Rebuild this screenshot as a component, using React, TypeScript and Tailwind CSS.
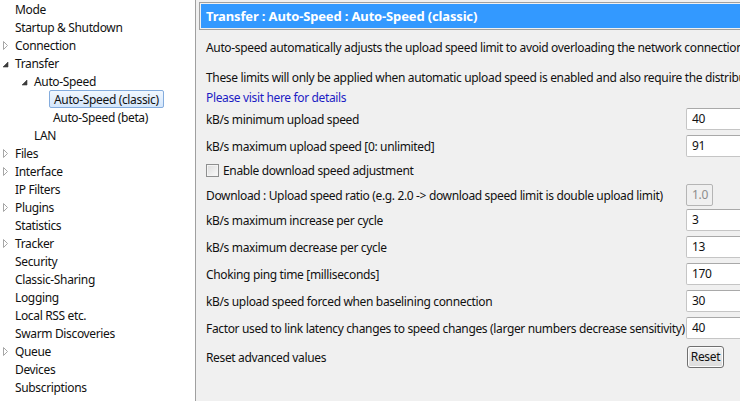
import React from 'react'

type Node = { label: string; level: number; arrow?: 'closed' | 'open'; selected?: boolean }

const tree: Node[] = [
  { label: 'Mode', level: 0 },
  { label: 'Startup & Shutdown', level: 0 },
  { label: 'Connection', level: 0, arrow: 'closed' },
  { label: 'Transfer', level: 0, arrow: 'open' },
  { label: 'Auto-Speed', level: 1, arrow: 'open' },
  { label: 'Auto-Speed (classic)', level: 2, selected: true },
  { label: 'Auto-Speed (beta)', level: 2 },
  { label: 'LAN', level: 1 },
  { label: 'Files', level: 0, arrow: 'closed' },
  { label: 'Interface', level: 0, arrow: 'closed' },
  { label: 'IP Filters', level: 0 },
  { label: 'Plugins', level: 0, arrow: 'closed' },
  { label: 'Statistics', level: 0 },
  { label: 'Tracker', level: 0, arrow: 'closed' },
  { label: 'Security', level: 0 },
  { label: 'Classic-Sharing', level: 0 },
  { label: 'Logging', level: 0 },
  { label: 'Local RSS etc.', level: 0 },
  { label: 'Swarm Discoveries', level: 0 },
  { label: 'Queue', level: 0, arrow: 'closed' },
  { label: 'Devices', level: 0 },
  { label: 'Subscriptions', level: 0 },
]

const indent = ['pl-[15px]', 'pl-[34px]', 'pl-[53px]']
const arrowPos = ['left-[2px]', 'left-[21px]', 'left-[40px]']

function Arrow({ kind, level }: { kind: 'closed' | 'open'; level: number }) {
  return (
    <svg
      className={`absolute top-[5px] ${arrowPos[level]}`}
      width="8"
      height="9"
      viewBox="0 0 8 9"
    >
      {kind === 'closed' ? (
        <path d="M1.5 0.5 L5.5 4.5 L1.5 8.5 Z" fill="white" stroke="#a6a6a6" strokeWidth="1" />
      ) : (
        <path d="M6 3 L6 8 L1 8 Z" fill="#3c3c3c" stroke="#3c3c3c" strokeWidth="0.6" />
      )}
    </svg>
  )
}

function TreeRow({ node }: { node: Node }) {
  return (
    <div className={`relative flex h-[18px] items-center ${indent[node.level]}`}>
      {node.arrow ? <Arrow kind={node.arrow} level={node.level} /> : null}
      {node.selected ? (
        <span className="-ml-[4px] flex h-[18px] items-center rounded-[2px] border border-[#84acdd] bg-gradient-to-b from-[#f1f7fe] to-[#d3e6fc] px-[4px] pt-px leading-none">
          {node.label}
        </span>
      ) : (
        <span className="pt-px leading-none">{node.label}</span>
      )}
    </div>
  )
}

function Field({ value, disabled }: { value: string; disabled?: boolean }) {
  if (disabled) {
    return (
      <div className="flex h-[22px] w-[27px] items-center rounded-[2px] border border-[#b5b5b5] bg-[#f0f0f0] pl-[5px] text-[#8d8d8d]">
        {value}
      </div>
    )
  }
  return (
    <div className="flex h-[22px] w-[80px] shrink-0 items-center rounded-[2px] border border-[#c5c5c5] border-t-[#a9a9a9] bg-white pl-[5px]">
      {value}
    </div>
  )
}

function Row({ label, children, className = '' }: { label: string; children: React.ReactNode; className?: string }) {
  return (
    <div className={`flex h-[22px] items-center ${className}`}>
      <div className="w-[480px] shrink-0 whitespace-nowrap pt-px">{label}</div>
      <div className="flex">{children}</div>
    </div>
  )
}

export default function App() {
  return (
    <div
      className="flex h-[401px] w-[740px] overflow-hidden text-[12px] tracking-[-0.35px] text-[#111]"
      style={{ fontFamily: '"Noto Sans", "Open Sans", sans-serif' }}
    >
      <div className="w-[196px] shrink-0 border-r border-[#a0a0a0] bg-white">
        {tree.map((n) => (
          <TreeRow key={n.label} node={n} />
        ))}
      </div>

      <div className="min-w-0 flex-1 bg-[#f0f0f0] pl-[3px] pt-[2px]">
        <div className="w-[600px] border border-[#a0a0a0] p-px">
          <div className="flex h-[24px] items-center bg-[#3399ff] pl-[5px] pt-px text-[13px] font-bold tracking-[-0.15px] whitespace-nowrap text-white">
            Transfer : Auto-Speed : Auto-Speed (classic)
          </div>
        </div>

        <div className="pl-[7px]">
          <div className="mt-[8px] flex h-[18px] items-center whitespace-nowrap pt-px">
            Auto-speed automatically adjusts the upload speed limit to avoid overloading the network connection
          </div>
          <div className="mt-[12px] flex h-[18px] items-center whitespace-nowrap pt-px">
            These limits will only be applied when automatic upload speed is enabled and also require the distributed database
          </div>
          <div className="mt-[2px] flex h-[18px] items-center whitespace-nowrap pt-px text-[#1c1cc4]">
            Please visit here for details
          </div>

          <Row label="kB/s minimum upload speed" className="mt-[2px]">
            <Field value="40" />
          </Row>
          <Row label="kB/s maximum upload speed [0: unlimited]" className="mt-[5px]">
            <Field value="91" />
          </Row>
          <div className="mt-[4px] flex h-[18px] items-center gap-[4px]">
            <span className="h-[13px] w-[13px] border border-[#8e8f8f] bg-gradient-to-br from-[#dcdcdc] to-[#fbfbfb] shadow-[inset_0_0_0_1px_#f4f4f4]" />
            <span className="pt-px">Enable download speed adjustment</span>
          </div>
          <Row label="Download : Upload speed ratio (e.g. 2.0 -> download speed limit is double upload limit)" className="mt-[5px]">
            <Field value="1.0" disabled />
          </Row>
          <Row label="kB/s maximum increase per cycle" className="mt-[3px]">
            <Field value="3" />
          </Row>
          <Row label="kB/s maximum decrease per cycle" className="mt-[5px]">
            <Field value="13" />
          </Row>
          <Row label="Choking ping time [milliseconds]" className="mt-[5px]">
            <Field value="170" />
          </Row>
          <Row label="kB/s upload speed forced when baselining connection" className="mt-[5px]">
            <Field value="30" />
          </Row>
          <Row label="Factor used to link latency changes to speed changes (larger numbers decrease sensitivity)" className="mt-[5px]">
            <Field value="40" />
          </Row>
          <Row label="Reset advanced values" className="mt-[7px]">
            <button className="ml-px flex h-[22px] w-[37px] items-center justify-center rounded-[3px] border border-[#707070] bg-gradient-to-b from-[#f2f2f2] to-[#dcdcdc] text-[12px] shadow-[inset_0_0_0_1px_#fcfcfc]">
              Reset
            </button>
          </Row>
        </div>
      </div>
    </div>
  )
}
